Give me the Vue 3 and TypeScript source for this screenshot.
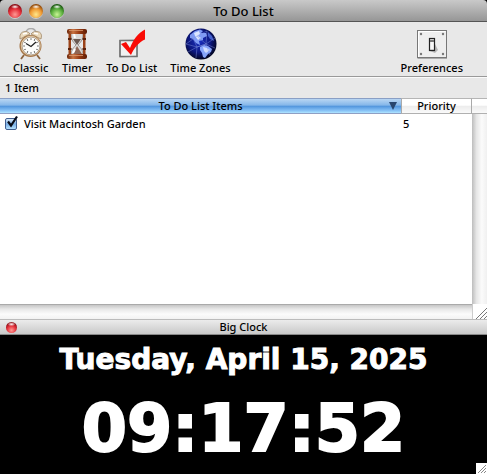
<script setup lang="ts">
import { ref } from 'vue'

interface Task {
  id: number
  title: string
  priority: number
  done: boolean
}

const tasks = ref<Task[]>([
  { id: 1, title: 'Visit Macintosh Garden', priority: 5, done: true },
])

const lights = [
  { name: 'Close', tone: 'red' },
  { name: 'Minimize', tone: 'amber' },
  { name: 'Zoom', tone: 'green' },
]

const ticks = Array.from({ length: 12 }, (_, i) => i * 30)
const date = 'Tuesday, April 15, 2025'
const time = '09:17:52'
</script>

<template>
  <main class="screen">
    <section class="window">
      <header class="titlebar">
        <div class="lights">
          <button v-for="l in lights" :key="l.name" type="button" class="light" :class="l.tone" :aria-label="l.name"></button>
        </div>
        <h1 class="title">To Do List</h1>
      </header>

      <nav class="toolbar">
        <button type="button" class="tool">
          <svg class="icon" viewBox="0 0 32 32" aria-hidden="true">
            <path d="M11 5a5 4.500 0 0 1 10 0" fill="none" stroke="#aaa" stroke-width="1.6" />
            <path d="M9 27l-3 4M22 27l3 4" stroke="#8b6440" stroke-width="1.8" />
            <path d="M5 11Q4 4 10 3.500Q14 3.500 15 6Z" fill="#ead9bb" stroke="#9f8868" stroke-width=".8" />
            <path d="M26 11Q28 4 22 3.500Q17 3.500 16 6Z" fill="#ead9bb" stroke="#9f8868" stroke-width=".8" />
            <path d="M8 6l4-1M19 5l4 1" stroke="#fff" stroke-width="1.600" />
            <circle cx="15.500" cy="18" r="11" fill="#a47649" />
            <circle cx="15.800" cy="17.800" r="10" fill="#e8cfaa" />
            <circle cx="16" cy="18" r="8.900" fill="#fdfdfb" stroke="#887765" stroke-width=".6" />
            <path v-for="t in ticks" :key="t" d="M16 10.300v1.500" :transform="`rotate(${t} 16 18)`" stroke="#555" stroke-width="1" />
            <path d="M11 15.500l5 3 5-4.500" fill="none" stroke="#222" stroke-width="1.300" />
          </svg>
          <span>Classic</span>
        </button>
        <button type="button" class="tool">
          <svg class="icon" viewBox="0 0 32 32" aria-hidden="true">
            <defs>
              <linearGradient id="wood" x1="0" x2="1" y1="0" y2="0">
                <stop offset="0" stop-color="#6b2408" />
                <stop offset=".3" stop-color="#c87442" />
                <stop offset=".6" stop-color="#9b3d14" />
                <stop offset="1" stop-color="#5c1b04" />
              </linearGradient>
            </defs>
            <path d="M10 5h12c0 6-1 8-5 12 4 4 5 6 5 11H10c0-5 1-7 5-11-4-4-5-6-5-12z" fill="#d9d9d7" stroke="#8d8580" stroke-width=".8" />
            <path d="M12 11h8l-4 6z" fill="#6a5a52" />
            <path d="M16 18l-4 8h9z" fill="#8f6654" />
            <path d="M13 6l1 4M14 21l-2 4" stroke="#fff" stroke-width="2" />
            <path d="M7.500 4h2.500v24H7.500zM22 4h2.500v24H22z" fill="#9a4218" />
            <path d="M7 10h3.500v2H7zM21.500 10H25v2h-3.500zM7 20h3.500v2H7zM21.500 20H25v2h-3.500z" fill="#5a220c" />
            <rect x="6" y="1" width="20" height="5" rx="2" fill="url(#wood)" />
            <rect x="6" y="26" width="20" height="5" rx="2" fill="url(#wood)" />
            <path d="M8 2.500h14M8 27.500h14" stroke="#dc9a70" stroke-width=".8" />
          </svg>
          <span>Timer</span>
        </button>
        <button type="button" class="tool">
          <svg class="icon" viewBox="0 0 32 32" aria-hidden="true">
            <rect x="4" y="12.500" width="17" height="16" fill="#f1f1f1" stroke="#555" stroke-width="1.400" />
            <path d="M4 12.500l17-.5M3.500 29l18-.8M20.500 13l.5 15" stroke="#888" stroke-width=".7" />
            <path d="M5 16l5-2 4 6C17 12 22 5 29 1.500v10C23 14 18 20 15 27z" fill="#f90b05" />
          </svg>
          <span>To Do List</span>
        </button>
        <button type="button" class="tool">
          <svg class="icon" viewBox="0 0 32 32" aria-hidden="true">
            <defs>
              <radialGradient id="sea" cx=".45" cy=".42" r=".6">
                <stop offset="0" stop-color="#1a2fc0" />
                <stop offset=".6" stop-color="#0c1780" />
                <stop offset="1" stop-color="#01031a" />
              </radialGradient>
            </defs>
            <circle cx="16" cy="16" r="15.500" fill="url(#sea)" />
            <path d="M5 7l5-4 5-1.500 3 1.500-2 2 5 0 1 3-4 2 0 2-4 1 1 4-4-2-3-4-3-1z" fill="#7f9bf5" />
            <path d="M9 5l5-2 1 3-2 2 3 2-3 2-3-4z" fill="#dbe5ff" />
            <path d="M15 19l4-2 4 1 4 3-1 3-3 2-3 4-2-1-1-4-2-3z" fill="#86a4fb" />
            <path d="M18 19l4 1 3 2-4 3-2-2z" fill="#d0dcff" />
            <path d="M23 4l4 4 2 5-4-2-2-3z" fill="#4560cc" />
            <path d="M1 16L12 8l9 8 9-6M3 24l9-5 9-3 4 11M6 6l6 13-1 11M12 8L22 3l-1 13-9 3L1 16M21 16l9 4" fill="none" stroke="#8193dd" stroke-width=".45" />
          </svg>
          <span>Time Zones</span>
        </button>
        <button type="button" class="tool last">
          <svg class="icon" viewBox="0 0 32 32" aria-hidden="true">
            <rect x="1.500" y="3" width="29.500" height="28" fill="#aaa" />
            <rect x="1.500" y="2.500" width="29" height="27" fill="#eee" stroke="#777" />
            <path d="M2.500 29V3.500h27" fill="none" stroke="#fff" />
            <circle cx="5" cy="6" r="1.200" fill="#777" />
            <circle cx="27" cy="6" r="1.200" fill="#777" />
            <circle cx="5" cy="26" r="1.200" fill="#777" />
            <circle cx="27" cy="26" r="1.200" fill="#777" />
            <path d="M18 14l4 8-3 3-5-2z" fill="#b5b5b5" />
            <rect x="13.500" y="10.500" width="5" height="12" fill="#ddd" stroke="#222" stroke-width="1.200" />
            <path d="M14 12h4v2h-4z" fill="#777" />
            <path d="M14.500 14h3v7h-3z" fill="#f8f8f8" />
          </svg>
          <span>Preferences</span>
        </button>
      </nav>

      <p class="status">{{ tasks.length }} Item</p>

      <div class="list">
        <table class="tasks">
          <thead>
            <tr>
              <th class="sorted" aria-sort="descending">
                <div class="sorted-label">
                  <span>To Do List Items</span>
                  <svg class="arrow" viewBox="0 0 8 8" aria-hidden="true"><path d="M0 0h8L4 8z" fill="#28466f" /></svg>
                </div>
              </th>
              <th class="priority">Priority</th>
            </tr>
          </thead>
          <tbody>
            <tr v-for="task in tasks" :key="task.id">
              <td>
                <label class="task">
                  <span class="tick">
                    <input v-model="task.done" type="checkbox" class="box" />
                    <svg v-if="task.done" class="mark" viewBox="0 0 14 14" aria-hidden="true">
                      <path d="M3 6.500l3 4L12 1.500" fill="none" stroke="#080c18" stroke-width="2.200" />
                    </svg>
                  </span>
                  <span>{{ task.title }}</span>
                </label>
              </td>
              <td class="rank">{{ task.priority }}</td>
            </tr>
          </tbody>
        </table>
        <div class="side">
          <div class="cap"></div>
          <div class="vtrack"></div>
        </div>
        <div class="htrack"></div>
        <div class="corner">
          <svg class="grip" viewBox="0 0 12 12" aria-hidden="true">
            <path d="M1 12L12 1M5 12l7-7M9 12l3-3" stroke="#777" />
          </svg>
        </div>
      </div>
    </section>

    <section class="clock">
      <header class="clockbar">
        <button type="button" class="light red small" aria-label="Close clock"></button>
        <h2 class="clock-title">Big Clock</h2>
      </header>
      <div class="face">
        <p class="date">{{ date }}</p>
        <p class="time">{{ time }}</p>
        <svg class="face-grip" viewBox="0 0 11 11" aria-hidden="true">
          <path d="M0 0h11v11H0z" fill="#fff" />
          <path d="M2 10l8-8M5 10l5-5M8 10l2-2" stroke="#888" />
        </svg>
      </div>
    </section>
  </main>
</template>

<style>
body {
  margin: 0;
  background: #000;
}
</style>

<style scoped>
.screen {
  display: flex;
  flex-direction: column;
  min-height: 100vh;
  font: 500 11px/14px "Noto Sans", "Open Sans", sans-serif;
  color: #000;
}
h1, h2, p {
  margin: 0;
  font-weight: 500;
}
button {
  font: inherit;
  color: inherit;
  border: 0;
  padding: 0;
  background: none;
}
.titlebar {
  display: grid;
  grid-template-columns: 1fr auto 1fr;
  align-items: center;
  height: 21px;
  border-bottom: 1px solid #555;
  border-radius: 4px 4px 0 0;
  background: linear-gradient(#c9c9c9, #969696);
}
.lights {
  display: flex;
  gap: 7px;
  padding-left: 8px;
}
.title {
  font-size: 13px;
  line-height: 20px;
}
.light {
  width: 14px;
  height: 14px;
  border-radius: 50%;
  box-shadow: 0 1px 0 #ccc;
}
.red {
  background:
    radial-gradient(ellipse 4px 2px at 50% 20%, #fff, transparent),
    radial-gradient(circle at 50% 75%, #ff9a94 0, #e5303a 45%, #8c0c14 75%);
}
.amber {
  background:
    radial-gradient(ellipse 4px 2px at 50% 20%, #fff, transparent),
    radial-gradient(circle at 50% 75%, #ffe78a 0, #ef9a33 45%, #934c0c 75%);
}
.green {
  background:
    radial-gradient(ellipse 4px 2px at 50% 20%, #fff, transparent),
    radial-gradient(circle at 50% 75%, #c9f595 0, #59ad3c 45%, #1d5c12 75%);
}
.small {
  width: 11px;
  height: 11px;
}
.toolbar {
  display: flex;
  gap: 13px;
  padding: 6px 24px 1px 13px;
  background: #e8e8e8;
  border-bottom: 1px solid #999;
}
.tool {
  display: flex;
  flex-direction: column;
  align-items: center;
  gap: 1px;
}
.last {
  margin-left: auto;
}
.icon {
  width: 32px;
  height: 32px;
}
.status {
  padding: 3px 5px;
  border-top: 1px solid #fafafa;
  background: #e8e8e8;
}
.list {
  display: grid;
  grid-template-columns: 1fr 15px;
  grid-template-rows: minmax(206px, auto) 15px;
  background: #fff;
}
.tasks {
  align-self: start;
  width: 100%;
  table-layout: fixed;
  border-collapse: separate;
  border-spacing: 0;
}
th, .cap {
  box-sizing: border-box;
  height: 16px;
  padding: 0;
  font-weight: 500;
  border-top: 1px solid #b5b5b5;
  border-bottom: 1px solid #b0b0b0;
  background: linear-gradient(#fff 0 45%, #ececec 50%, #fafafa);
}
.sorted {
  border-top-color: #8a9fc5;
  border-bottom-color: #8f9fc4;
  background: linear-gradient(#b9d6f3, #84b6e9 45%, #4f93dc 50%, #8cc6f8 85%, #b0e5ff);
}
.priority {
  width: 71px;
  border-left: 1px solid #aaa;
  border-right: 1px solid #aaa;
}
.sorted-label {
  display: grid;
  grid-template-columns: 8px 1fr 8px;
  align-items: center;
  padding: 0 4px;
}
.sorted-label span {
  grid-column: 2;
}
.arrow {
  width: 8px;
  height: 8px;
}
td {
  padding: 3px 0 1px;
}
.rank {
  padding-left: 2px;
}
.task {
  display: flex;
  gap: 6px;
  padding-left: 5px;
}
.tick {
  position: relative;
  width: 13px;
  height: 14px;
}
.box {
  appearance: none;
  display: block;
  width: 12px;
  height: 12px;
  margin: 1px 0 0;
  border: 1px solid #405f91;
  border-radius: 2px;
  background: linear-gradient(#dcebfa, #77aee6 50%, #b5e1ff);
}
.mark {
  position: absolute;
  top: -2px;
  left: 0;
  width: 14px;
  height: 14px;
  pointer-events: none;
}
.side {
  display: flex;
  flex-direction: column;
}
.vtrack {
  flex: 1;
  background: linear-gradient(90deg, #bdbdbd, #e6e6e6 30%, #fbfbfb 65%, #f0f0f0);
}
.htrack {
  box-sizing: border-box;
  border-top: 1px solid #aaa;
  background: linear-gradient(#c6c6c6, #e8e8e8 30%, #fbfbfb 65%, #f2f2f2);
}
.corner {
  display: flex;
  align-items: flex-end;
  justify-content: flex-end;
  border-left: 1px solid #ccc;
}
.grip {
  width: 12px;
  height: 12px;
}
.clock {
  flex: 1;
  display: flex;
  flex-direction: column;
}
.clockbar {
  display: grid;
  grid-template-columns: 1fr auto 1fr;
  align-items: center;
  height: 14px;
  padding: 0 6px;
  border-top: 1px solid #bbb;
  border-bottom: 1px solid #888;
  background: linear-gradient(#ececec, #c9c9c9);
}
.clock-title {
  font-size: 11px;
}
.face {
  position: relative;
  flex: 1;
  padding-top: 7px;
  background: #000;
  color: #fff;
  text-align: center;
  font-family: Verdana, "DejaVu Sans", sans-serif;
}
.date {
  font-size: 28px;
  line-height: 36px;
  font-weight: 700;
  -webkit-text-stroke: 1px #fff;
}
.time {
  padding-top: 11px;
  font-size: 65px;
  line-height: 80px;
  font-weight: 700;
  -webkit-text-stroke: 2px #fff;
}
.face-grip {
  position: absolute;
  right: 0;
  bottom: 0;
  width: 11px;
  height: 11px;
}
</style>
